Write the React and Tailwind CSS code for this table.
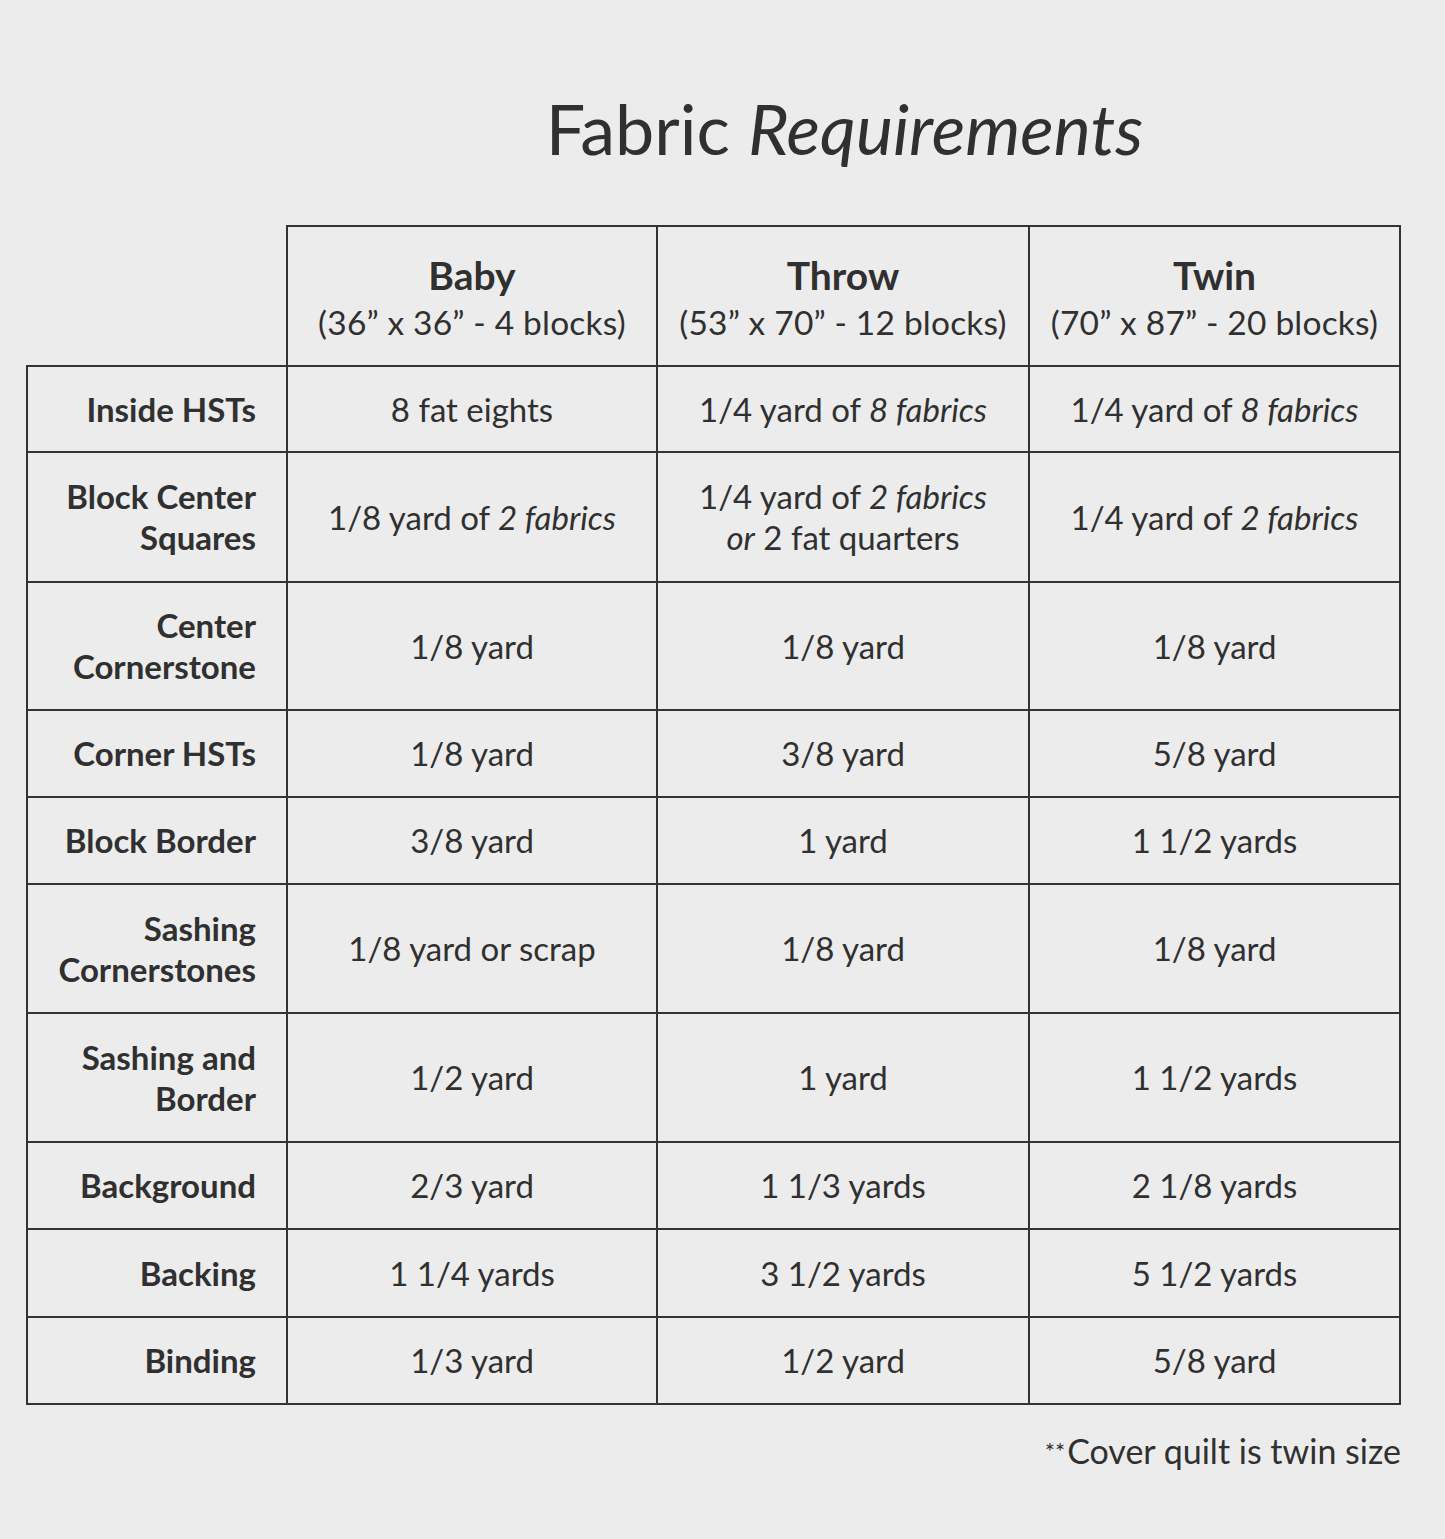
const sizes = [
  { name: 'Baby', dims: '(36” x 36” - 4 blocks)' },
  { name: 'Throw', dims: '(53” x 70” - 12 blocks)' },
  { name: 'Twin', dims: '(70” x 87” - 20 blocks)' },
];

const I = ({ children }) => <em className="italic">{children}</em>;

const rows = [
  { label: ['Inside HSTs'], h: 'h-[86px]', cells: [['8 fat eights'], [<>1/4 yard of <I>8 fabrics</I></>], [<>1/4 yard of <I>8 fabrics</I></>]] },
  { label: ['Block Center', 'Squares'], h: 'h-[130px]', cells: [[<>1/8 yard of <I>2 fabrics</I></>], [<>1/4 yard of <I>2 fabrics</I></>, <><I>or</I> 2 fat quarters</>], [<>1/4 yard of <I>2 fabrics</I></>]] },
  { label: ['Center', 'Cornerstone'], h: 'h-[128px]', cells: [['1/8 yard'], ['1/8 yard'], ['1/8 yard']] },
  { label: ['Corner HSTs'], h: 'h-[87px]', cells: [['1/8 yard'], ['3/8 yard'], ['5/8 yard']] },
  { label: ['Block Border'], h: 'h-[87px]', cells: [['3/8 yard'], ['1 yard'], ['1 1/2 yards']] },
  { label: ['Sashing', 'Cornerstones'], h: 'h-[129px]', cells: [['1/8 yard or scrap'], ['1/8 yard'], ['1/8 yard']] },
  { label: ['Sashing and', 'Border'], h: 'h-[129px]', cells: [['1/2 yard'], ['1 yard'], ['1 1/2 yards']] },
  { label: ['Background'], h: 'h-[87px]', cells: [['2/3 yard'], ['1 1/3 yards'], ['2 1/8 yards']] },
  { label: ['Backing'], h: 'h-[88px]', cells: [['1 1/4 yards'], ['3 1/2 yards'], ['5 1/2 yards']] },
  { label: ['Binding'], h: 'h-[87px]', cells: [['1/3 yard'], ['1/2 yard'], ['5/8 yard']] },
];

export default function App() {
  return (
    <div className="min-h-screen w-[1445px] h-[1539px] bg-[#ececed] text-[#303030] font-['Lato','Liberation_Sans',sans-serif] pt-[92px] pl-[26px]">
      {/* title sits over the size columns */}
      <div className="flex">
        <div className="w-[262px]" />
        <h1 className="w-[1113px] text-center text-[70px] leading-[72px] font-normal">
          Fabric <span className="italic">Requirements</span>
        </h1>
      </div>

      <div className="mt-[61px] grid grid-cols-[262px_370px_372px_371px]">
        <div className="h-[142px] border-r-2 border-b-2 border-[#333]" />
        {sizes.map((s) => (
          <div key={s.name} className="h-[142px] border-t-2 border-r-2 border-b-2 border-[#333] flex flex-col items-center justify-center pt-[4px]">
            <div className="text-[39px] leading-[48px] font-bold">{s.name}</div>
            <div className="text-[33.5px] leading-[46px] tracking-[0.2px]">{s.dims}</div>
          </div>
        ))}

        {rows.map((r) => (
          <div key={r.label.join(' ')} className="contents">
            <div className={`${r.h} border-l-2 border-r-2 border-b-2 border-[#333] flex flex-col items-end justify-center pr-[30px] text-[33px] leading-[41px] font-bold`}>
              {r.label.map((l) => <span key={l}>{l}</span>)}
            </div>
            {r.cells.map((c, i) => (
              <div key={i} className={`${r.h} border-r-2 border-b-2 border-[#333] flex flex-col items-center justify-center text-[33px] leading-[41px]`}>
                {c.map((line, j) => <span key={j}>{line}</span>)}
              </div>
            ))}
          </div>
        ))}
      </div>

      <p className="w-[1375px] mt-[26px] text-right text-[34px] leading-[40px]">
        <span className="text-[24px] align-top mr-[2px]">**</span>Cover quilt is twin size
      </p>
    </div>
  );
}
